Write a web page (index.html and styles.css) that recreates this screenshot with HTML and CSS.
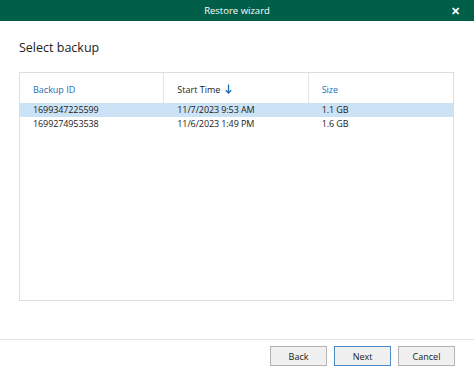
FILE: index.html
```html
<!DOCTYPE html>
<html lang="en">
<head>
<meta charset="UTF-8">
<title>Restore wizard</title>
<link rel="stylesheet" href="styles.css">
</head>
<body>
<div class="ventana">
    <div class="titulo">
        <span class="titulo-texto">Restore wizard</span>
        <span class="cerrar">&#x2715;</span>
    </div>

    <div class="contenido">
        <h2>Select backup</h2>

        <div class="tabla">
            <div class="cabecera">
                <div class="col azul">Backup ID</div>
                <div class="col">Start Time
                    <svg class="flecha" width="7" height="10" viewBox="0 0 7 10">
                        <path d="M3.5 0.5 V9 M0.8 6.2 L3.5 9 L6.2 6.2" fill="none" stroke="#1f6eb5" stroke-width="1.3"/>
                    </svg>
                </div>
                <div class="col azul">Size</div>
            </div>
            <div class="fila seleccionada">
                <div class="col">1699347225599</div>
                <div class="col">11/7/2023 9:53 AM</div>
                <div class="col">1.1 GB</div>
            </div>
            <div class="fila">
                <div class="col">1699274953538</div>
                <div class="col">11/6/2023 1:49 PM</div>
                <div class="col">1.6 GB</div>
            </div>
        </div>
    </div>

    <div class="pie">
        <button class="boton">Back</button>
        <button class="boton principal">Next</button>
        <button class="boton">Cancel</button>
    </div>
</div>
</body>
</html>
```

FILE: styles.css
```css
* {
    box-sizing: border-box;
}

body {
    margin: 0;
    background: #ffffff;
    font-family: "Open Sans", "Noto Sans", sans-serif;
    color: #1a1a1a;
}

.ventana {
    width: 474px;
    height: 372px;
    display: flex;
    flex-direction: column;
}

/* barra de titulo */
.titulo {
    height: 21px;
    background: #005e49;
    color: #ffffff;
    display: flex;
    align-items: center;
    justify-content: center;
    position: relative;
}

.titulo-texto {
    font-size: 9.5px;
}

.cerrar {
    position: absolute;
    right: 14px;
    top: 3px;
    font-size: 11px;
    font-weight: bold;
}

.contenido {
    flex: 1;
    padding: 0 20px 0 19px;
}

h2 {
    font-weight: normal;
    font-size: 12.5px;
    margin: 18px 0 16px 0;
    color: #222;
}

/* tabla de copias */
.tabla {
    height: 229px;
    border: 1px solid #dedede;
}

.cabecera, .fila {
    display: flex;
}

.cabecera {
    height: 30px;
    align-items: center;
    font-size: 9px;
}

.cabecera .col {
    height: 100%;
    display: flex;
    align-items: center;
    padding-top: 2px;
    border-right: 1px solid #e6e6e6;
}

.cabecera .col:last-child {
    border-right: none;
}

.col {
    width: 145px;
    padding-left: 13px;
}

.azul {
    color: #1f6eb5;
}

.flecha {
    margin-left: 5px;
}

.fila {
    height: 14px;
    font-size: 9px;
    line-height: 14px;
    letter-spacing: -0.1px;
}

.seleccionada {
    background: #cce3f5;
}

/* botones */
.pie {
    height: 33px;
    border-top: 1px solid #e2e2e2;
    display: flex;
    justify-content: flex-end;
    gap: 7px;
    padding: 6px 19px 0 0;
}

.boton {
    width: 57px;
    height: 20px;
    background: #f0f0f0;
    border: 1px solid #b3b3b3;
    font-family: "Open Sans", "Noto Sans", sans-serif;
    font-size: 9px;
    color: #1a1a1a;
    padding: 0;
}

.principal {
    border-color: #4d8ac4;
}
```
